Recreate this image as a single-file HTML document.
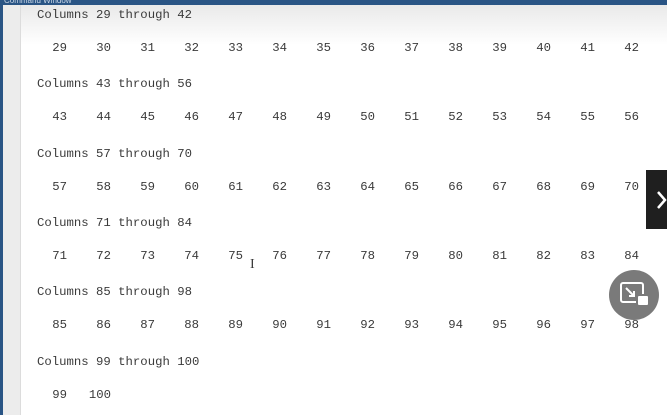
<!DOCTYPE html>
<html><head><style>
body{margin:0;width:667px;height:415px;overflow:hidden;background:#fff;position:relative;font-family:"Liberation Mono",monospace;font-size:12.3px;color:#3a3a3a}
.tb{position:absolute;left:0;top:0;width:667px;height:5px;background:#2a5585}
.tb span{position:absolute;left:4px;top:-4px;font:8px "Liberation Sans",sans-serif;color:#c8d6e6}
.lb{position:absolute;left:0;top:0;width:3px;height:415px;background:#2a5585}
.gut{position:absolute;left:3px;top:5px;width:17px;height:410px;background:#ececec;border-right:1px solid #dcdcdc}
.shade{position:absolute;left:21px;top:5px;width:646px;height:40px;background:linear-gradient(#e9e9e9,#fff)}
.t{position:absolute;white-space:pre;line-height:14px}
.n{position:absolute;text-align:right;width:30px;line-height:14px}
.arrow{position:absolute;left:646px;top:170px;width:21px;height:59px;background:#1f1f1f}
.fab{position:absolute;left:609px;top:270px;width:50px;height:50px;border-radius:50%;background:#7a7a7a}
</style></head><body>
<div class="shade"></div>
<div class="gut"></div>
<div class="lb"></div>
<div class="tb"><span>Command Window</span></div>
<div id="c"></div>
<div class="arrow"><svg width="21" height="59"><path d="M12 22 L19 30 L12 38" stroke="#fff" stroke-width="2.5" fill="none"/></svg></div>
<div class="fab"><svg width="50" height="50"><rect x="12" y="13" width="22" height="19" rx="2" stroke="#fff" stroke-width="2" fill="none"/><path d="M17 18 L25 26 M25 21 L25 26 L20 26" stroke="#fff" stroke-width="2" fill="none"/><rect x="28" y="25" width="12" height="11" rx="2" fill="#fff" stroke="#7a7a7a" stroke-width="2"/></svg></div>
<div class="t" style="left:250px;top:258px;font-family:'Liberation Serif',serif;font-size:14px">I</div>
<script>
var c=document.getElementById('c'),h='';
var blocks=[[29,42],[43,56],[57,70],[71,84],[85,98],[99,100]];
blocks.forEach(function(b,i){
 var y=8+i*69.3;
 h+='<div class="t" style="left:37px;top:'+y+'px">Columns '+b[0]+' through '+b[1]+'</div>';
 for(var k=0;k<=b[1]-b[0];k++){
  h+='<div class="n" style="left:'+(37+k*44)+'px;top:'+(y+33)+'px">'+(b[0]+k)+'</div>';
 }
});
c.innerHTML=h;
</script>
</body></html>
